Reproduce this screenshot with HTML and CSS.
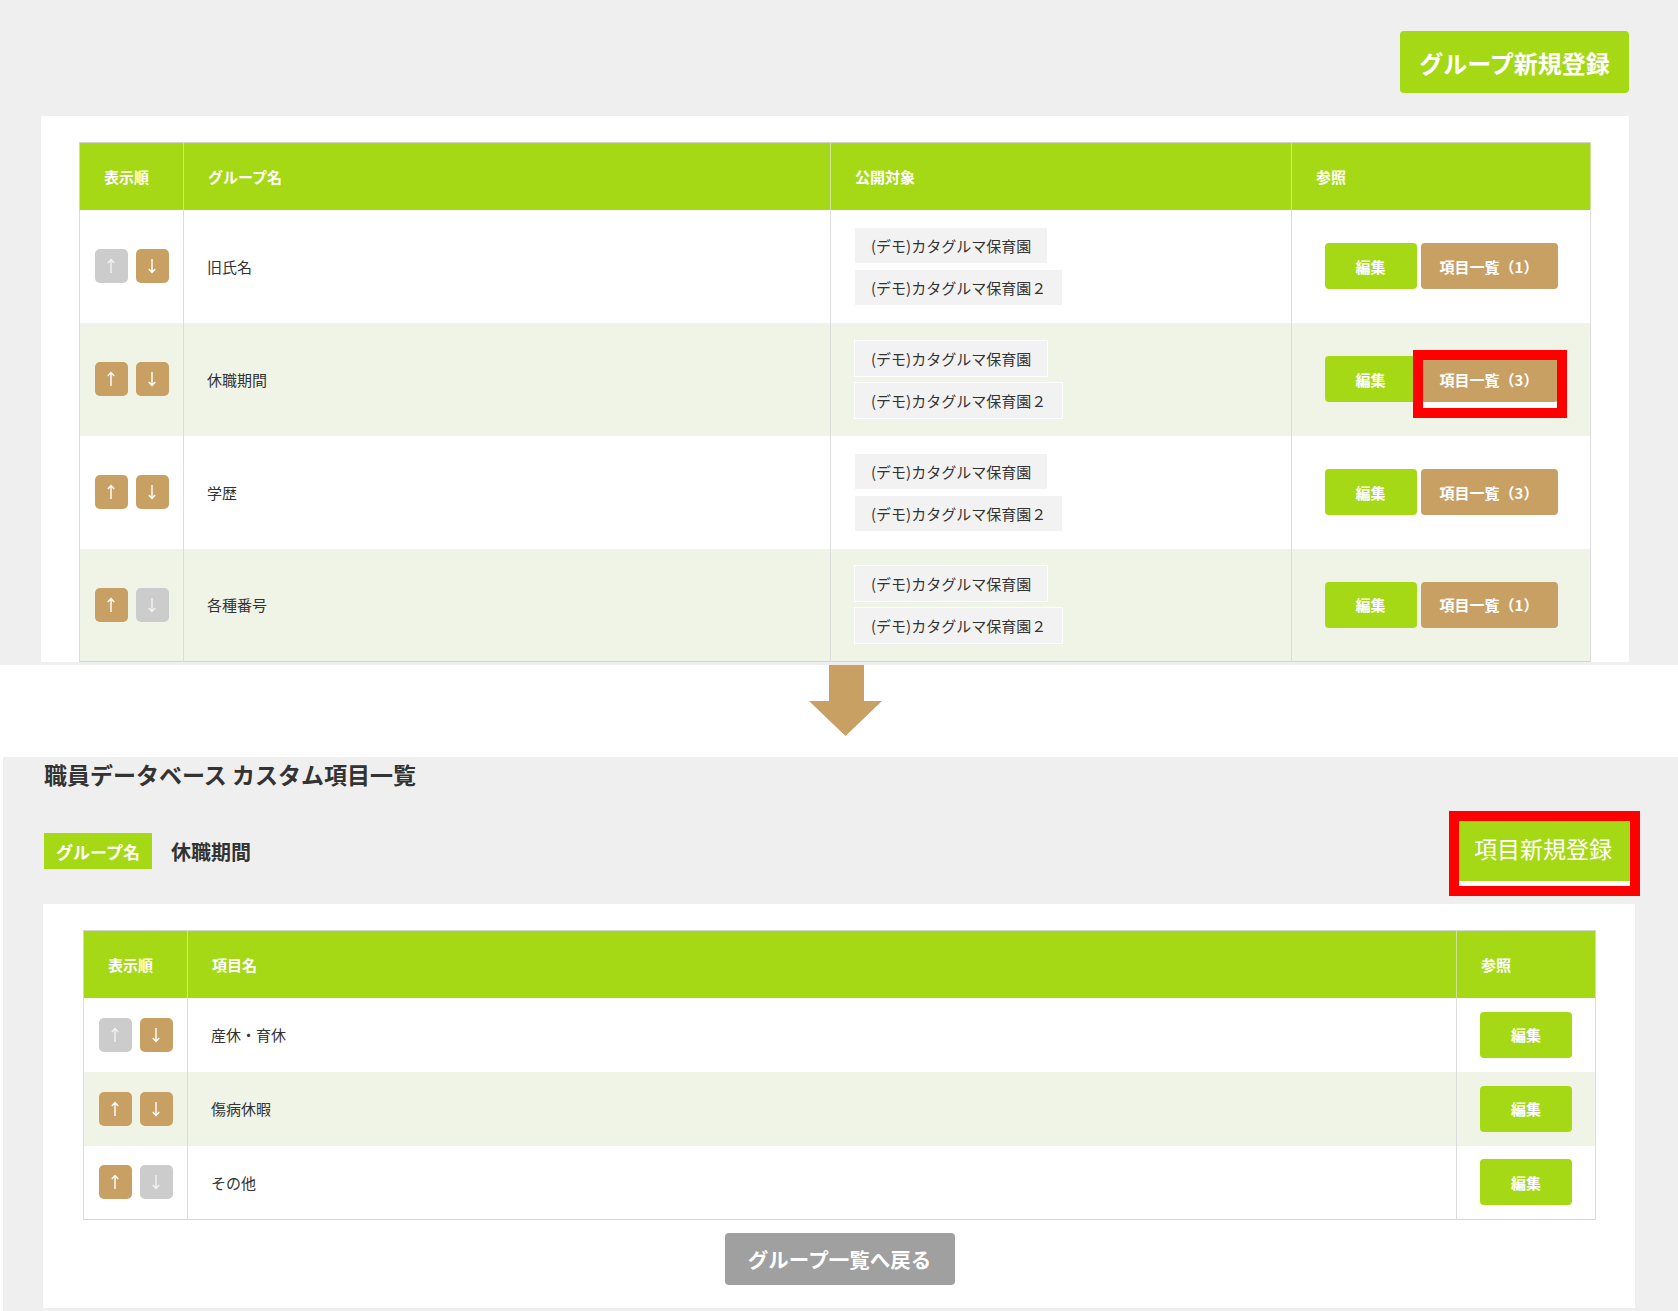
FILE: index.html
```html
<!DOCTYPE html>
<html lang="ja">
<head>
<meta charset="utf-8">
<title>カスタム項目</title>
<link rel="stylesheet" href="styles.css">
</head>
<body>
<section class="shot shot-top">
  <div class="toolbar">
    <a class="btn btn-new-group">グループ新規登録</a>
  </div>
  <div class="panel panel-top">
    <table class="grid grid-groups">
      <colgroup><col class="c-order"><col class="c-name"><col class="c-target"><col class="c-ref"></colgroup>
      <thead>
        <tr><th>表示順</th><th>グループ名</th><th>公開対象</th><th>参照</th></tr>
      </thead>
      <tbody>
        <tr>
          <td class="order"><span class="mv off"><svg viewBox="0 0 10 16"><path d="M5 15V1.5M1.8 5L5 1.5 8.2 5"/></svg></span><span class="mv"><svg viewBox="0 0 10 16"><path d="M5 1v13.5M1.8 11L5 14.5 8.2 11"/></svg></span></td>
          <td class="name">旧氏名</td>
          <td><div class="tags"><span class="tag">(デモ)カタグルマ保育園</span><span class="tag">(デモ)カタグルマ保育園２</span></div></td>
          <td class="ref"><a class="btn btn-edit">編集</a><a class="btn btn-list">項目一覧（1）</a></td>
        </tr>
        <tr class="alt">
          <td class="order"><span class="mv"><svg viewBox="0 0 10 16"><path d="M5 15V1.5M1.8 5L5 1.5 8.2 5"/></svg></span><span class="mv"><svg viewBox="0 0 10 16"><path d="M5 1v13.5M1.8 11L5 14.5 8.2 11"/></svg></span></td>
          <td class="name">休職期間</td>
          <td><div class="tags"><span class="tag">(デモ)カタグルマ保育園</span><span class="tag">(デモ)カタグルマ保育園２</span></div></td>
          <td class="ref"><a class="btn btn-edit">編集</a><span class="mark mark-list"><a class="btn btn-list">項目一覧（3）</a><span class="mark-box"></span></span></td>
        </tr>
        <tr>
          <td class="order"><span class="mv"><svg viewBox="0 0 10 16"><path d="M5 15V1.5M1.8 5L5 1.5 8.2 5"/></svg></span><span class="mv"><svg viewBox="0 0 10 16"><path d="M5 1v13.5M1.8 11L5 14.5 8.2 11"/></svg></span></td>
          <td class="name">学歴</td>
          <td><div class="tags"><span class="tag">(デモ)カタグルマ保育園</span><span class="tag">(デモ)カタグルマ保育園２</span></div></td>
          <td class="ref"><a class="btn btn-edit">編集</a><a class="btn btn-list">項目一覧（3）</a></td>
        </tr>
        <tr class="alt">
          <td class="order"><span class="mv"><svg viewBox="0 0 10 16"><path d="M5 15V1.5M1.8 5L5 1.5 8.2 5"/></svg></span><span class="mv off"><svg viewBox="0 0 10 16"><path d="M5 1v13.5M1.8 11L5 14.5 8.2 11"/></svg></span></td>
          <td class="name">各種番号</td>
          <td><div class="tags"><span class="tag">(デモ)カタグルマ保育園</span><span class="tag">(デモ)カタグルマ保育園２</span></div></td>
          <td class="ref"><a class="btn btn-edit">編集</a><a class="btn btn-list">項目一覧（1）</a></td>
        </tr>
      </tbody>
    </table>
  </div>
</section>

<div class="step">
  <svg class="step-arrow" viewBox="0 0 73 71"><polygon points="20,0 55,0 55,36 73,36 36.5,71 0,36 20,36"/></svg>
</div>

<section class="shot shot-bottom">
  <h1 class="title">職員データベース カスタム項目一覧</h1>
  <div class="group-bar">
    <div class="group-info">
      <span class="group-label">グループ名</span>
      <span class="group-name">休職期間</span>
    </div>
    <span class="mark mark-new"><a class="btn btn-new-item">項目新規登録</a><span class="mark-box"></span></span>
  </div>
  <div class="panel panel-bottom">
    <table class="grid grid-items">
      <colgroup><col class="c-order"><col class="c-item"><col class="c-ref2"></colgroup>
      <thead>
        <tr><th>表示順</th><th>項目名</th><th>参照</th></tr>
      </thead>
      <tbody>
        <tr>
          <td class="order"><span class="mv off"><svg viewBox="0 0 10 16"><path d="M5 15V1.5M1.8 5L5 1.5 8.2 5"/></svg></span><span class="mv"><svg viewBox="0 0 10 16"><path d="M5 1v13.5M1.8 11L5 14.5 8.2 11"/></svg></span></td>
          <td class="name">産休・育休</td>
          <td class="ref"><a class="btn btn-edit">編集</a></td>
        </tr>
        <tr class="alt">
          <td class="order"><span class="mv"><svg viewBox="0 0 10 16"><path d="M5 15V1.5M1.8 5L5 1.5 8.2 5"/></svg></span><span class="mv"><svg viewBox="0 0 10 16"><path d="M5 1v13.5M1.8 11L5 14.5 8.2 11"/></svg></span></td>
          <td class="name">傷病休暇</td>
          <td class="ref"><a class="btn btn-edit">編集</a></td>
        </tr>
        <tr>
          <td class="order"><span class="mv"><svg viewBox="0 0 10 16"><path d="M5 15V1.5M1.8 5L5 1.5 8.2 5"/></svg></span><span class="mv off"><svg viewBox="0 0 10 16"><path d="M5 1v13.5M1.8 11L5 14.5 8.2 11"/></svg></span></td>
          <td class="name">その他</td>
          <td class="ref"><a class="btn btn-edit">編集</a></td>
        </tr>
      </tbody>
    </table>
    <div class="back-row"><a class="btn btn-back">グループ一覧へ戻る</a></div>
  </div>
</section>
</body>
</html>
```
FILE: styles.css
```css
* { box-sizing: border-box; }
html, body { margin: 0; padding: 0; }
body {
  width: 1678px;
  background: #fff;
  font-family: "Noto Sans CJK JP", "Noto Sans", sans-serif;
  color: #333;
  font-size: 15px;
}
.shot { background: #efefef; }
.shot-top {
  height: 665px;
  overflow: hidden;
  padding: 31px 49px 0 41px;
}
.toolbar { display: flex; justify-content: flex-end; }
.btn {
  display: inline-flex;
  align-items: center;
  justify-content: center;
  color: #fff;
  text-decoration: none;
  border-radius: 4px;
  white-space: nowrap;
}
.btn-new-group {
  width: 229px;
  height: 62px;
  background: #a6d915;
  font-size: 24px;
  font-weight: 700;
}
.panel { background: #fff; }
.panel-top {
  margin-top: 23px;
  padding: 26px 39px 0 38px;
}
.grid {
  width: 100%;
  border-collapse: collapse;
  table-layout: fixed;
  border: 1px solid #d4d4d4;
}
.grid th {
  background: #a6d915;
  color: #fff;
  font-weight: 700;
  font-size: 15px;
  text-align: left;
  padding: 0 0 0 24px;
  height: 67px;
  border-left: 1px solid #cfe19a;
  border-right: 1px solid #cfe19a;
}
.grid td {
  border-left: 1px solid #dcdcdc;
  border-right: 1px solid #dcdcdc;
  vertical-align: middle;
  padding: 0;
}
.grid-groups tbody td { height: 113px; }
.grid-items tbody td { height: 74px; }
.grid tr.alt td { background: #f0f4e7; }
.c-order { width: 104px; }
.c-name { width: 647px; }
.c-target { width: 461px; }
.c-ref { width: 299px; }
.c-ref2 { width: 139px; }
.order { text-align: center; font-size: 0; }
.mv {
  display: inline-flex;
  align-items: center;
  justify-content: center;
  width: 33px;
  height: 34px;
  border-radius: 5px;
  background: #c9a063;
  margin: 0 4px;
}
.mv.off { background: #cccccc; }
.mv svg { width: 10px; height: 16px; }
.mv path { fill: none; stroke: #fff; stroke-width: 1.4; }
.mv.off path { stroke: #f2f2f2; }
.name { padding-left: 23px !important; font-size: 15px; color: #333; }
.tags {
  display: flex;
  flex-direction: column;
  align-items: flex-start;
  gap: 5px;
  padding-left: 23px;
}
.tag {
  display: inline-block;
  background: #f2f2f2;
  border: 1px solid #fff;
  height: 37px;
  line-height: 35px;
  padding: 0 16px;
  font-size: 15px;
  color: #333;
}
.ref { text-align: center; font-size: 0; }
.ref .btn { font-size: 15px; font-weight: 700; height: 46px; vertical-align: middle; }
.btn-edit { width: 92px; background: #a6d915; }
.btn-list { width: 137px; background: #c9a063; margin-left: 4px; }
.mark { position: relative; display: inline-flex; vertical-align: middle; }
.mark-box {
  position: absolute;
  border: 10px solid #ff0000;
  background: linear-gradient(to top, #fff 6px, transparent 6px);
  pointer-events: none;
}
.mark-list .mark-box { top: -6px; left: -4px; right: -9px; bottom: -16px; }
.mark-list .btn-list { margin-left: 4px; }

.step { height: 92px; padding-left: 809px; }
.step-arrow { display: block; width: 73px; height: 71px; fill: #c9a063; }

.shot-bottom {
  margin-left: 3px;
  padding: 2px 43px 4px 40px;
}
.title {
  margin: 0 0 0 1px;
  font-size: 23px;
  line-height: 30px;
  font-weight: 700;
  color: #333;
}
.group-bar {
  display: flex;
  justify-content: space-between;
  align-items: flex-start;
  margin-top: 26px;
  height: 66px;
}
.group-info { display: flex; align-items: center; margin-top: 18px; margin-left: 1px; }
.group-label {
  display: inline-flex;
  align-items: center;
  justify-content: center;
  width: 108px;
  height: 36px;
  background: #a6d915;
  color: #fff;
  font-size: 17px;
  font-weight: 700;
}
.group-name { margin-left: 19px; font-size: 20px; font-weight: 700; color: #333; }
.mark-new { margin-right: 4px; }
.btn-new-item {
  width: 176px;
  height: 66px;
  background: #a6d915;
  font-size: 23px;
  font-weight: 400;
  border-radius: 0;
}
.mark-new .mark-box { top: -4px; left: -6px; right: -9px; bottom: -15px; background: linear-gradient(to top, #fff 5px, transparent 5px); }
.panel-bottom {
  margin-top: 23px;
  padding: 26px 39px 23px 40px;
}
.back-row { display: flex; justify-content: center; margin-top: 13px; }
.btn-back {
  width: 230px;
  height: 52px;
  background: #a0a0a0;
  font-size: 20.5px;
  font-weight: 700;
}
```
